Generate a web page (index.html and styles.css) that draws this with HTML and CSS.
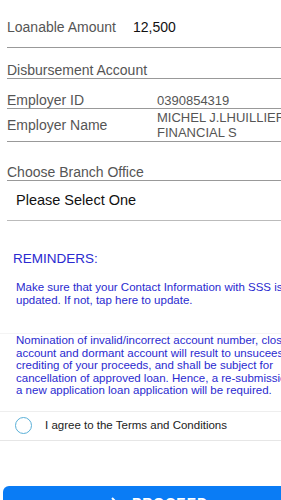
FILE: index.html
```html
<!DOCTYPE html>
<html lang="en">
<head>
    <meta charset="UTF-8">
    <meta name="viewport" content="width=device-width, initial-scale=1.0">
    <title>Loan Application</title>
    <link rel="stylesheet" href="styles.css">
</head>
<body>
<div class="page">

    <div class="row amount">
        <span class="label">Loanable Amount</span>
        <span class="amount-value">12,500</span>
    </div>

    <div class="row single">
        <span class="label">Disbursement Account</span>
    </div>

    <div class="row pair">
        <span class="label">Employer ID</span>
        <span class="value">0390854319</span>
    </div>
    <div class="row pair">
        <span class="label">Employer Name</span>
        <span class="value">MICHEL J.LHUILLIER<br>FINANCIAL S</span>
    </div>

    <div class="row single branch">
        <span class="label">Choose Branch Office</span>
    </div>
    <div class="select">Please Select One</div>

    <h3 class="reminders">REMINDERS:</h3>
    <p class="note first">Make sure that your Contact Information with SSS is<br>updated. If not, tap here to update.</p>
    <p class="note second">Nomination of invalid/incorrect account number, closed<br>account and dormant account will result to unsuceesful<br>crediting of your proceeds, and shall be subject for<br>cancellation of approved loan. Hence, a re-submission of<br>a new application loan application will be required.</p>

    <div class="agree">
        <span class="radio"></span>
        <span>I agree to the Terms and Conditions</span>
    </div>

    <button class="proceed">
        <svg width="14" height="14" viewBox="0 0 14 14"><path d="M4 2 L9 7 L4 12" fill="none" stroke="#fff" stroke-width="2"/></svg>
        PROCEED
    </button>

</div>
</body>
</html>
```

FILE: styles.css
```css
html, body { margin: 0; overflow: hidden; background: #fff; }
body { font-family: "Liberation Sans", Arial, sans-serif; width: 281px; height: 500px; }
.page { width: 320px; padding-top: 19px; }

.row { display: flex; margin-left: 7px; border-bottom: 1px solid #999; color: #555; font-size: 14px; }
.label { color: #555; }
.amount { height: 28px; align-items: flex-start; font-size: 14px; }
.amount .label { width: 126px; }
.amount-value { color: #111; }
.single { margin-top: 14px; line-height: 16px; padding-bottom: 0; }
.pair { margin-top: 13px; align-items: center; }
.pair + .pair { margin-top: 0; padding-top: 1px; padding-bottom: 1px; }
.pair .label { width: 150px; }
.value { font-size: 13px; line-height: 15px; color: #555; }
.branch { margin-top: 22px; }

.select { margin-left: 7px; padding: 11px 9px 12px; font-size: 14.5px; color: #111; border-bottom: 1px solid #bbb; }

.reminders { margin: 30px 0 0 13px; font-size: 13.5px; font-weight: normal; color: #2a2ad0; }
.note { margin: 0; padding: 0 0 0 16px; font-size: 11.5px; line-height: 12.5px; color: #2a2ad0; white-space: nowrap; }
.note.first { margin-top: 15px; }
.note.second { margin-top: 27px; border-top: 1px solid #f4f4f4; }

.agree { display: flex; align-items: center; gap: 13px; margin-top: 14px; padding: 5px 0 6px 15px; border-top: 1px solid #eee; border-bottom: 1px solid #e6e6e6; font-size: 11.5px; color: #222; }
.radio { width: 15px; height: 15px; border: 1.5px solid #5ab0d8; border-radius: 50%; }

.proceed { display: flex; justify-content: center; align-items: center; gap: 10px; margin: 45px 0 0 3px; width: 310px; height: 40px; border: 0; border-radius: 6px; background: #0a7cf5; color: #fff; font: bold 14px "Liberation Sans", sans-serif; letter-spacing: 1px; padding-bottom: 6px; }
```
